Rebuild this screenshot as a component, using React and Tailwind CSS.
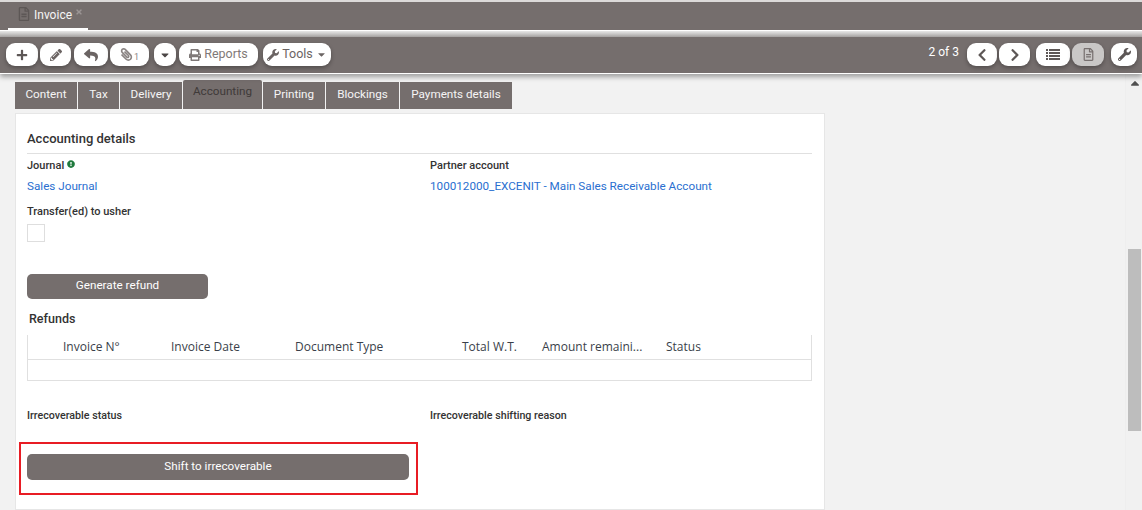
import { FaPlus, FaPencilAlt, FaReply, FaPaperclip, FaCaretDown, FaPrint, FaWrench, FaChevronLeft, FaChevronRight, FaRegFileAlt, FaExclamationCircle, FaTimes, FaCaretUp } from 'react-icons/fa';

const tabs = [
  { label: 'Content', width: 'w-[62px]' },
  { label: 'Tax', width: 'w-[41px]' },
  { label: 'Delivery', width: 'w-[62px]' },
  { label: 'Accounting', width: 'w-[79px]', active: true },
  { label: 'Printing', width: 'w-[62px]' },
  { label: 'Blockings', width: 'w-[73px]' },
  { label: 'Payments details', width: 'w-[112px]' },
];

const columns = [
  { label: 'Invoice N°', width: 'w-[108px]' },
  { label: 'Invoice Date', width: 'w-[124px]' },
  { label: 'Document Type', width: 'w-[167px]' },
  { label: 'Total W.T.', width: 'w-[80px]' },
  { label: 'Amount remaini...', width: 'w-[124px]' },
  { label: 'Status', width: 'w-[60px]' },
];

function ToolButton({ width, children, className = '' }) {
  return (
    <button className={`h-[23px] ${width} flex items-center justify-center rounded-[9px] bg-white text-[#6b6463] shadow-[0_2px_4px_rgba(0,0,0,0.3)] ${className}`}>
      {children}
    </button>
  );
}

function ListIcon() {
  return (
    <svg width="14" height="11" viewBox="0 0 14 11" fill="#5d5756">
      <rect x="0" y="0" width="2" height="2" />
      <rect x="3" y="0" width="11" height="2" />
      <rect x="0" y="3" width="2" height="2" />
      <rect x="3" y="3" width="11" height="2" />
      <rect x="0" y="6" width="2" height="2" />
      <rect x="3" y="6" width="11" height="2" />
      <rect x="0" y="9" width="2" height="2" />
      <rect x="3" y="9" width="11" height="2" />
    </svg>
  );
}

export default function App() {
  return (
    <div className="h-[510px] w-[1142px] overflow-hidden bg-[#f2f2f2] font-['Roboto',sans-serif] flex flex-col">
      {/* Tab strip */}
      <div className="h-[2px] bg-[#dcdad9]" />
      <div className="h-[29px] bg-[#756e6d] border-b border-white pl-[8px] shrink-0">
        <div className="h-[28px] w-[80px] border-b-2 border-white flex items-start pt-[4px] pl-[9px] text-white">
          <FaRegFileAlt size={14} className="text-[#5d5756] mt-[1px] mr-[2px] shrink-0" />
          <span className="ml-[1px] text-[12px] leading-[18px] text-[#f5f5f5]">Invoice</span>
          <FaTimes size={8} className="text-[#9b9594] mt-[2px] ml-[3px] shrink-0" />
        </div>
      </div>
      <div className="h-[6px] bg-gradient-to-b from-[#e8e8e8] to-[#a9a6a5] shrink-0" />

      {/* Toolbar */}
      <div className="relative z-10 h-[37px] shrink-0 bg-[#756e6d] border-b border-white pl-[6px] pr-[5px] pt-[6px] flex items-start shadow-[0_3px_5px_rgba(0,0,0,0.35)]">
        <ToolButton width="w-[32px]"><FaPlus size={12} className="text-[#5d5756]" /></ToolButton>
        <ToolButton width="w-[31px]" className="ml-[2px]"><FaPencilAlt size={12} /></ToolButton>
        <ToolButton width="w-[34px]" className="ml-[3px]"><FaReply size={14} /></ToolButton>
        <ToolButton width="w-[39px]" className="ml-[2px]">
          <FaPaperclip size={13} className="text-[#8a8483] -scale-x-100" />
          <span className="text-[9px] text-[#8a8483] mt-[6px] ml-[1px]">1</span>
        </ToolButton>
        <ToolButton width="w-[22px]" className="ml-[5px]"><FaCaretDown size={12} className="text-[#4b4645]" /></ToolButton>
        <ToolButton width="w-[79px]" className="ml-[3px] gap-[3px] text-[12.5px] text-[#7f7978]"><FaPrint size={12} />Reports</ToolButton>
        <ToolButton width="w-[68px]" className="ml-[5px] gap-[3px] text-[12.5px] text-[#4f4a55]"><FaWrench size={12} className="text-[#6b6463]" />Tools<FaCaretDown size={11} /></ToolButton>
        <span className="ml-auto text-[12px] leading-[18px] text-white mr-[8px]">2 of 3</span>
        <ToolButton width="w-[30px]"><FaChevronLeft size={14} className="text-[#5d5756]" /></ToolButton>
        <ToolButton width="w-[31px]" className="ml-[2px]"><FaChevronRight size={14} className="text-[#5d5756]" /></ToolButton>
        <ToolButton width="w-[34px]" className="ml-[6px]"><ListIcon /></ToolButton>
        <ToolButton width="w-[32px]" className="ml-[2px] !bg-[#c9c7c6]"><FaRegFileAlt size={13} className="text-[#77706f]" /></ToolButton>
        <ToolButton width="w-[26px]" className="ml-[7px]"><FaWrench size={13} className="text-[#5d5756]" /></ToolButton>
      </div>

      <div className="flex flex-1 min-h-0">
        <main className="flex-1 min-w-0 pl-[15px] pt-[6px]">
          {/* Section tabs */}
          <div className="flex items-end gap-[1px] h-[29px]">
            {tabs.map((tab) => (
              <div
                key={tab.label}
                className={`${tab.width} flex items-center justify-center bg-[#756e6d] text-[11.7px] ${tab.active ? 'h-[29px] pb-[5px] rounded-t-[2px] text-[#3f3a39]' : 'h-[27px] pb-[2px] text-[#f5f5f5]'}`}
              >
                {tab.label}
              </div>
            ))}
          </div>

          {/* Form card */}
          <section className="mt-[4px] w-[810px] h-[397px] bg-white border border-[#e6e6e6] pl-[11px] pr-[12px] text-[#333]">
            <h2 className="h-[40px] pt-[16px] text-[13px] leading-[18px] font-medium border-b border-[#e0e0e0]">Accounting details</h2>

            <div className="grid grid-cols-[403px_1fr] mt-[5px]">
              <div>
                <div className="flex items-start h-[14px] text-[11px] leading-[14px] font-medium">
                  Journal
                  <FaExclamationCircle size={8} className="text-[#1f7a3d] ml-[3px] mt-[1px]" />
                </div>
                <a className="block mt-[5px] text-[11.7px] leading-[16px] text-[#2a6fd0]">Sales Journal</a>
              </div>
              <div>
                <div className="h-[14px] text-[11px] leading-[14px] font-medium">Partner account</div>
                <a className="block mt-[5px] text-[11.7px] leading-[16px] text-[#2a6fd0]">100012000_EXCENIT - Main Sales Receivable Account</a>
              </div>
            </div>

            <div className="mt-[11px] text-[11px] leading-[14px] font-medium">Transfer(ed) to usher</div>
            <div className="mt-[5px] w-[18px] h-[18px] border border-[#dedede]" />

            <button className="block mt-[32px] w-[181px] h-[25px] rounded-[5px] bg-[#756e6d] text-white text-[11.7px] pb-[2px]">Generate refund</button>

            <h3 className="mt-[12px] ml-[2px] text-[12.5px] leading-[16px] font-medium">Refunds</h3>

            {/* Refunds table */}
            <div className="mt-[8px] w-[785px] h-[46px] border-x border-b border-[#e0e0e0] font-['Open_Sans',sans-serif]">
              <div className="h-[25px] border-b border-[#e0e0e0] pl-[35px] flex items-center text-[#3a3f4a] text-[12px]">
                {columns.map((col) => (
                  <div key={col.label} className={`${col.width} shrink-0`}>{col.label}</div>
                ))}
              </div>
            </div>

            <div className="grid grid-cols-[403px_1fr] mt-[28px] text-[10.7px] leading-[14px] font-medium">
              <div>Irrecoverable status</div>
              <div>Irrecoverable shifting reason</div>
            </div>

            {/* Highlighted action */}
            <div className="mt-[19px] -ml-[8px] w-[399px] h-[53px] border-2 border-[#e81c24] pl-[6px] pt-[10px]">
              <button className="block w-[382px] h-[26px] rounded-[5px] bg-[#756e6d] text-white text-[11.7px] pb-[1px]">Shift to irrecoverable</button>
            </div>
          </section>
        </main>

        {/* Scrollbar */}
        <div className="w-[17px] shrink-0 bg-[#f1f1f1] border-l border-[#eeeeee] pt-[2px] pl-[1px]">
          <FaCaretUp size={14} className="text-[#505050] ml-[1px]" />
          <div className="mt-[159px] ml-[1px] w-[13px] h-[182px] bg-[#bdbdbd]" />
        </div>
      </div>
    </div>
  );
}
